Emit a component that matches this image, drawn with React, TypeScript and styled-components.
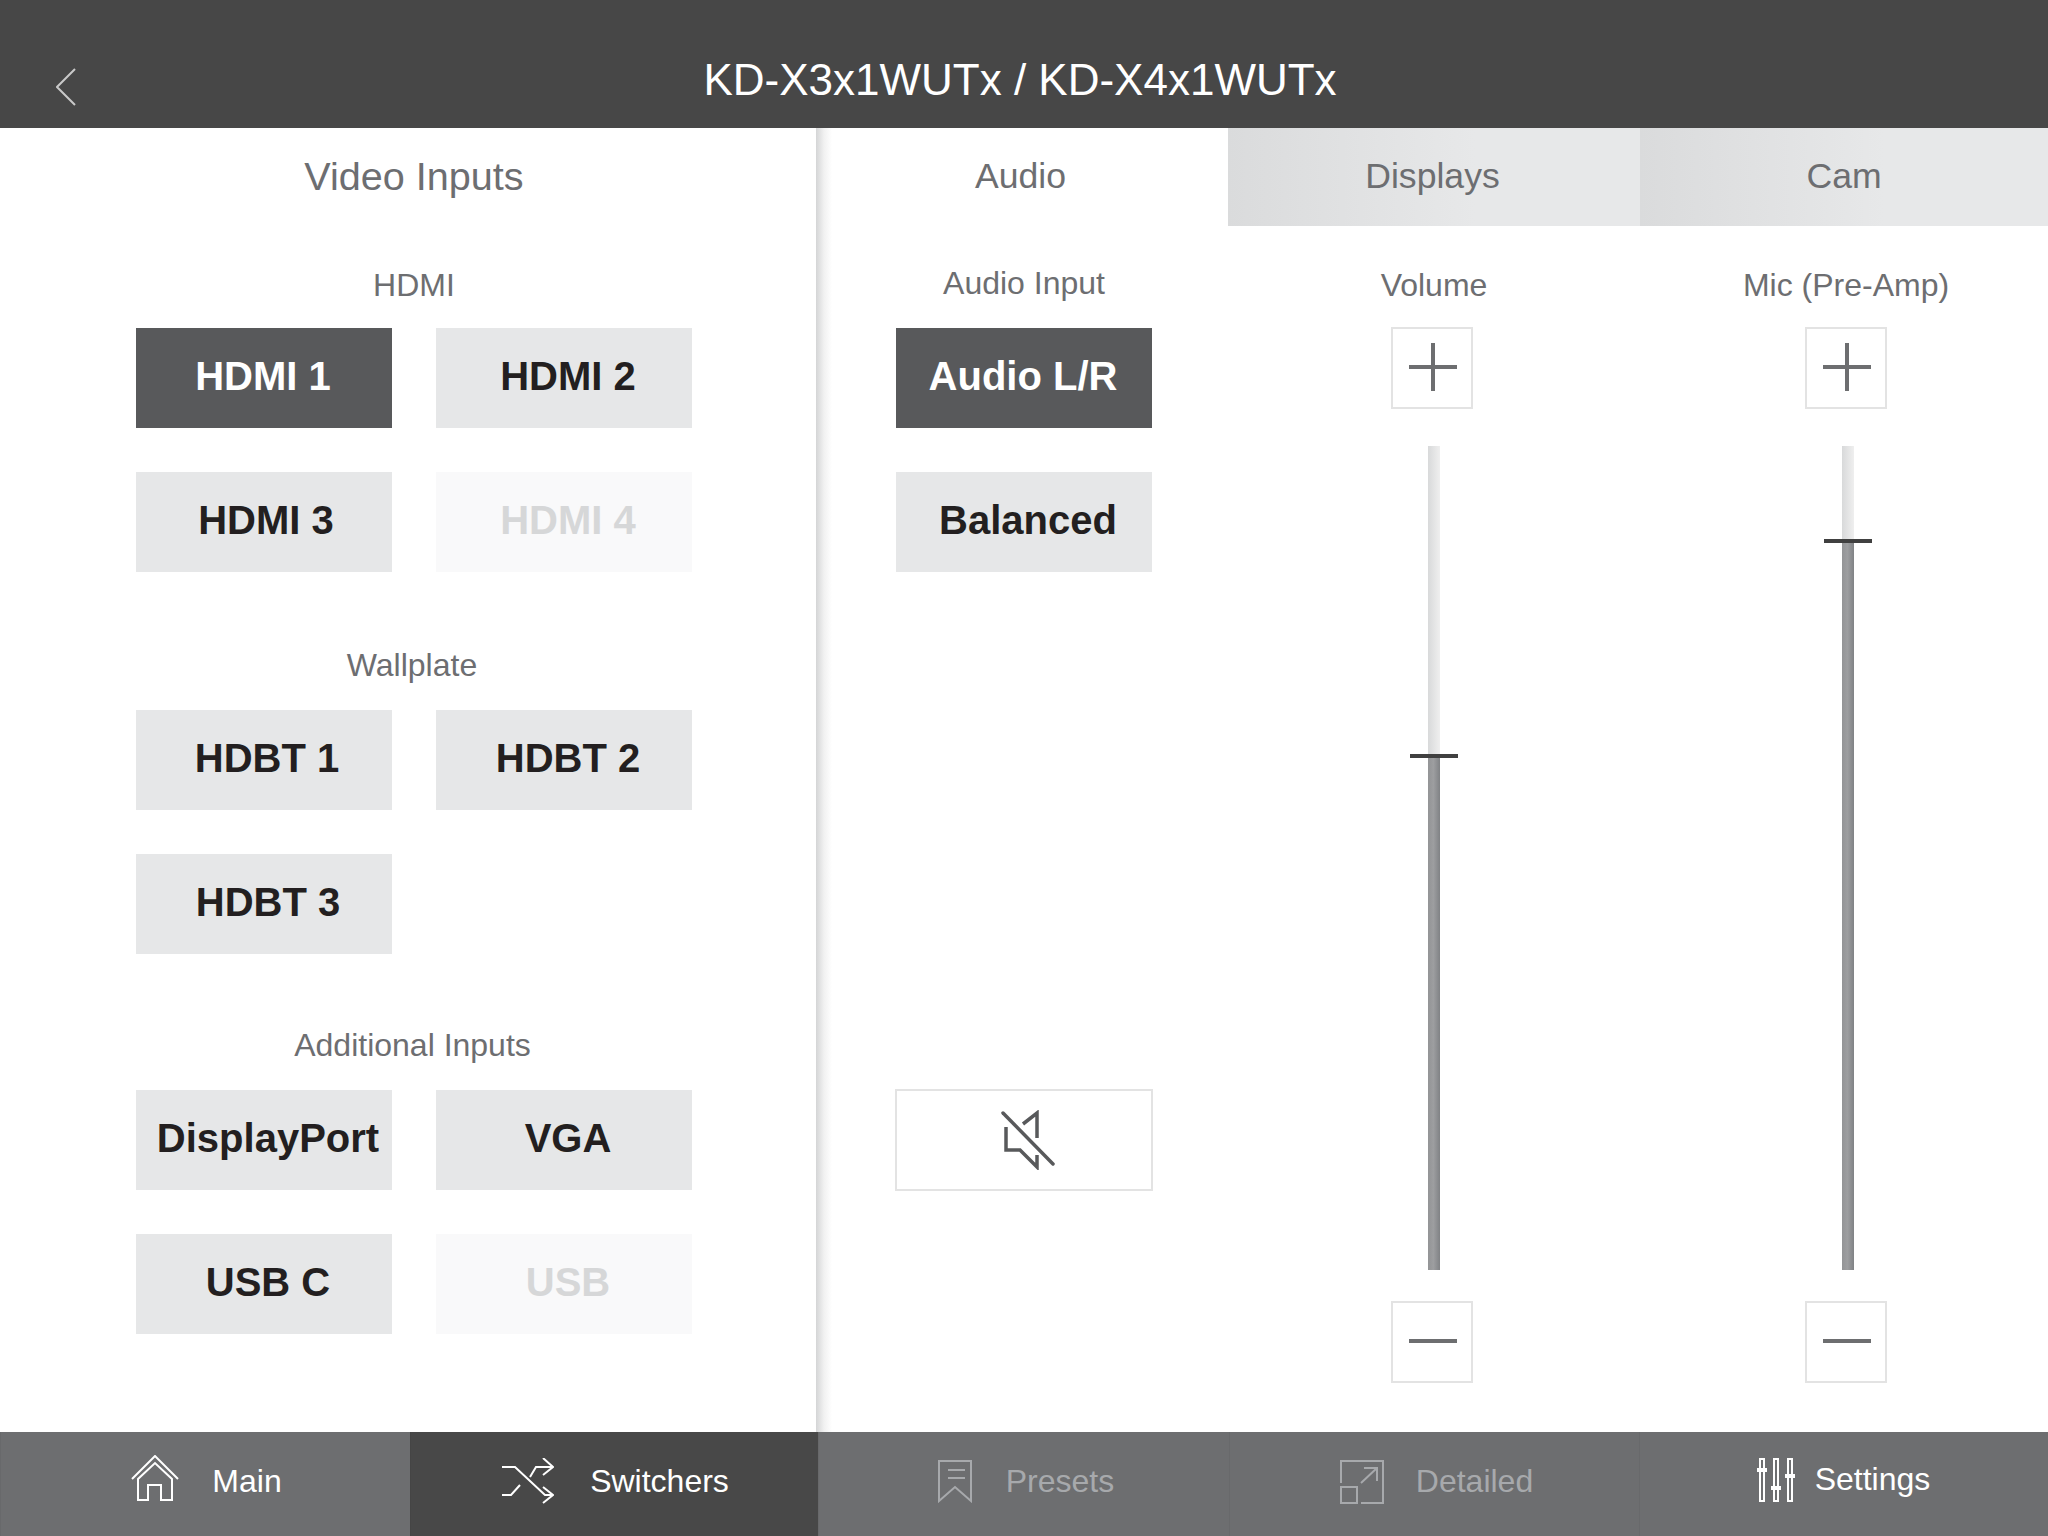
import React from "react";
import styled, { createGlobalStyle } from "styled-components";

const GlobalStyle = createGlobalStyle`
  html, body {
    margin: 0;
    padding: 0;
    background: #fff;
  }
  * {
    box-sizing: border-box;
  }
`;

const Page = styled.div`
  width: 2048px;
  height: 1536px;
  display: flex;
  flex-direction: column;
  font-family: "Liberation Sans", Arial, sans-serif;
  color: #6d6e71;
  overflow: hidden;
`;

const Header = styled.header`
  position: relative;
  height: 128px;
  flex: none;
  background: #474747;
  color: #fff;
  font-size: 44px;
  display: flex;
  justify-content: center;
  align-items: flex-end;
  padding: 0 8px 22px 0;
  line-height: 52px;
`;

const BackButton = styled.svg`
  position: absolute;
  left: 56px;
  top: 68px;
`;

const Main = styled.main`
  flex: 1;
  display: flex;
  min-height: 0;
`;

const LeftPanel = styled.section`
  width: 816px;
  flex: none;
  padding-left: 136px;
`;

const PanelTitle = styled.div`
  width: 556px;
  height: 96px;
  display: flex;
  align-items: center;
  justify-content: center;
  font-size: 39.6px;
`;

const Group = styled.div<{ $gapTop: number }>`
  width: 556px;
  margin-top: ${(p) => p.$gapTop}px;
  display: flex;
  flex-direction: column;
  align-items: center;
`;

const Label = styled.div<{ $shift?: number }>`
  height: 40px;
  line-height: 40px;
  font-size: 32px;
  text-align: center;
  margin-left: ${(p) => (p.$shift ?? 0) * 2}px;
`;

const ButtonGrid = styled.div<{ $top: number }>`
  width: 100%;
  margin-top: ${(p) => p.$top}px;
  display: grid;
  grid-template-columns: 256px 256px;
  column-gap: 44px;
  row-gap: 44px;
`;

const InputButton = styled.div<{ $state?: "on" | "off"; $nudge?: number }>`
  height: 100px;
  display: flex;
  align-items: center;
  justify-content: center;
  font-size: 40px;
  font-weight: 700;
  padding-bottom: 3px;
  padding-left: ${(p) => Math.max(p.$nudge ?? 0, 0) * 2}px;
  padding-right: ${(p) => Math.max(-(p.$nudge ?? 0), 0) * 2}px;
  background: ${(p) => (p.$state === "on" ? "#58595b" : p.$state === "off" ? "#f9f9fa" : "#e6e7e8")};
  color: ${(p) => (p.$state === "on" ? "#fff" : p.$state === "off" ? "#d6d7d8" : "#231f20")};
`;

const RightPanel = styled.section`
  position: relative;
  flex: 1;
  display: flex;
  flex-direction: column;

  &::before {
    content: "";
    position: absolute;
    left: 0;
    top: 0;
    bottom: 0;
    width: 16px;
    background: linear-gradient(to right, #d4d5d6, #f1f1f1 50%, #ffffff);
  }
`;

const Tabs = styled.div`
  height: 98px;
  flex: none;
  display: grid;
  grid-template-columns: 412px 412px 408px;
`;

const Tab = styled.div<{ $active?: boolean; $nudge?: number }>`
  display: flex;
  align-items: center;
  justify-content: center;
  font-size: 35.6px;
  padding-bottom: 2px;
  padding-right: ${(p) => (p.$nudge ?? 0) * 2}px;
  background: ${(p) => (p.$active ? "transparent" : "linear-gradient(to right, #dadbdc, #e7e8e9 60%)")};
`;

const Columns = styled.div`
  flex: 1;
  display: grid;
  grid-template-columns: 412px 412px 408px;
  min-height: 0;
`;

const AudioColumn = styled.div`
  padding: 37px 0 0 79px;
  display: flex;
  flex-direction: column;
`;

const AudioLabel = styled(Label)`
  width: 258px;
`;

const AudioButtons = styled.div`
  width: 256px;
  margin: 25px 0 0 1px;
  display: flex;
  flex-direction: column;
  gap: 44px;
`;

const MuteButton = styled.div`
  width: 258px;
  height: 102px;
  margin-top: 517px;
  border: 2px solid #e3e3e3;
  display: flex;
  align-items: center;
  justify-content: center;
  padding-left: 8px;
`;

const SliderColumn = styled.div<{ $shift: number }>`
  padding-top: 39px;
  padding-left: ${(p) => Math.max(p.$shift, 0) * 2}px;
  padding-right: ${(p) => Math.max(-p.$shift, 0) * 2}px;
  display: flex;
  flex-direction: column;
  align-items: center;
`;

const StepButton = styled.div`
  width: 82px;
  height: 82px;
  border: 2px solid #e3e3e3;
  display: flex;
  align-items: center;
  justify-content: center;
  padding-left: 2px;
`;

const PlusButton = styled(StepButton)`
  margin-top: 22px;
  padding-bottom: 2px;
`;

const MinusButton = styled(StepButton)`
  margin-top: 31px;
  padding-bottom: 2px;
`;

const Track = styled.div`
  position: relative;
  width: 12px;
  height: 824px;
  margin-top: 37px;
  margin-left: 4px;
  background: linear-gradient(to right, #d8d9da, #efefef);
`;

const TrackFill = styled.div`
  position: absolute;
  left: 0;
  right: 0;
  bottom: 0;
  background: linear-gradient(to right, #939496, #9d9ea0 45%, #808285);
`;

const Thumb = styled.div`
  position: absolute;
  left: -18px;
  width: 48px;
  height: 4px;
  top: -4px;
  background: #404040;
`;

const BottomNav = styled.nav`
  height: 104px;
  flex: none;
  display: grid;
  grid-template-columns: 410px 408px 411px 410px 409px;
  background: #6d6e70;
`;

const NavItem = styled.div<{ $active?: boolean; $dim?: boolean; $gap: number; $shift: number }>`
  display: flex;
  align-items: flex-start;
  justify-content: center;
  padding-left: ${(p) => p.$shift}px;
  gap: ${(p) => p.$gap}px;
  font-size: 32px;
  box-shadow: inset 1px 0 rgba(0, 0, 0, 0.04);
  background: ${(p) => (p.$active ? "#484848" : "transparent")};
  color: ${(p) => (p.$dim ? "#a7a9ac" : "#fff")};
`;

const NavIcon = styled.div<{ $top: number }>`
  margin-top: ${(p) => p.$top}px;
  display: flex;
`;

const NavLabel = styled.span<{ $top?: number }>`
  line-height: 40px;
  margin-top: ${(p) => p.$top ?? 29}px;
`;

const HomeIcon = () => (
  <svg width="48" height="46" viewBox="0 0 48 46" fill="none" stroke="#fff" strokeWidth="2">
    <path d="M1 24 L24 1 L47 24" />
    <path d="M7 24 V45 H17 V30 H30 V45 H41 V24 L24 8 Z" />
  </svg>
);

const ShuffleIcon = () => (
  <svg width="52" height="46" viewBox="0 0 52 46" fill="none" stroke="#fff" strokeWidth="2">
    <path d="M0 9 H13 L43 37 H51" />
    <path d="M0 37 H9 L18 27" />
    <path d="M28 19 L34 9 H51" />
    <path d="M41 0 L51 9 L41 17" />
    <path d="M41 29 L51 37 L41 45" />
  </svg>
);

const PresetIcon = () => (
  <svg width="34" height="43" viewBox="0 0 34 43" fill="none" stroke="#a7a9ac" strokeWidth="2">
    <path d="M1 1 H33 V41 L17 27 L1 41 Z" />
    <path d="M10 10 H27 M10 18 H27" />
  </svg>
);

const DetailedIcon = () => (
  <svg width="44" height="44" viewBox="0 0 44 44" fill="none" stroke="#a7a9ac" strokeWidth="2">
    <path d="M1 23 V1 H43 V43 H21" />
    <rect x="1" y="27" width="16" height="16" />
    <path d="M21 23 L37 8 M24 8 H37 V21" />
  </svg>
);

const SettingsIcon = () => (
  <svg width="38" height="44" viewBox="0 0 38 44" fill="none" stroke="#fff" strokeWidth="2">
    <rect x="3" y="1" width="4" height="42" />
    <rect x="17" y="1" width="4" height="42" />
    <rect x="31" y="1" width="4" height="42" />
    <rect x="0" y="10" width="10" height="4" fill="#fff" stroke="none" />
    <rect x="14" y="28" width="10" height="4" fill="#fff" stroke="none" />
    <rect x="28" y="16" width="10" height="4" fill="#fff" stroke="none" />
  </svg>
);

const PlusIcon = () => (
  <svg width="48" height="48" viewBox="0 0 48 48" stroke="#6d6e70" strokeWidth="4">
    <path d="M24 0 V48 M0 24 H48" />
  </svg>
);

const MinusIcon = () => (
  <svg width="48" height="4" viewBox="0 0 48 4" stroke="#6d6e70" strokeWidth="4">
    <path d="M0 2 H48" />
  </svg>
);

const MuteIcon = () => (
  <svg width="56" height="60" viewBox="0 0 56 60" fill="none" stroke="#58595b" strokeWidth="3.5">
    <path d="M3 3 L53 54" strokeLinecap="round" />
    <path d="M6 17 V40 H20 L37 57 V45" />
    <path d="M23 14 L37 3 V28" />
  </svg>
);

const Slider = ({ label, thumbTop, shift, labelShift }: { label: string; thumbTop: number; shift: number; labelShift: number }) => (
  <SliderColumn $shift={shift}>
    <Label $shift={labelShift}>{label}</Label>
    <PlusButton>
      <PlusIcon />
    </PlusButton>
    <Track>
      <TrackFill style={{ top: thumbTop }}>
        <Thumb />
      </TrackFill>
    </Track>
    <MinusButton>
      <MinusIcon />
    </MinusButton>
  </SliderColumn>
);

export default function App() {
  return (
    <Page>
      <GlobalStyle />
      <Header>
        <BackButton width="20" height="38" viewBox="0 0 20 38" fill="none" stroke="#c9c9c9" strokeWidth="2">
          <path d="M19 1 L1 19 L19 37" />
        </BackButton>
        KD-X3x1WUTx / KD-X4x1WUTx
      </Header>
      <Main>
        <LeftPanel>
          <PanelTitle>Video Inputs</PanelTitle>
          <Group $gapTop={41}>
            <Label>HDMI</Label>
            <ButtonGrid $top={23}>
              <InputButton $state="on" $nudge={-1}>HDMI 1</InputButton>
              <InputButton $nudge={4}>HDMI 2</InputButton>
              <InputButton $nudge={2}>HDMI 3</InputButton>
              <InputButton $state="off" $nudge={4}>HDMI 4</InputButton>
            </ButtonGrid>
          </Group>
          <Group $gapTop={73}>
            <Label $shift={-2}>Wallplate</Label>
            <ButtonGrid $top={25}>
              <InputButton $nudge={3}>HDBT 1</InputButton>
              <InputButton $nudge={4}>HDBT 2</InputButton>
              <InputButton $nudge={4}>HDBT 3</InputButton>
            </ButtonGrid>
          </Group>
          <Group $gapTop={71}>
            <Label $shift={-1.5}>Additional Inputs</Label>
            <ButtonGrid $top={25}>
              <InputButton $nudge={4}>DisplayPort</InputButton>
              <InputButton $nudge={4}>VGA</InputButton>
              <InputButton $nudge={4}>USB C</InputButton>
              <InputButton $state="off" $nudge={4}>USB</InputButton>
            </ButtonGrid>
          </Group>
        </LeftPanel>
        <RightPanel>
          <Tabs>
            <Tab $active $nudge={1.5}>Audio</Tab>
            <Tab $nudge={1.5}>Displays</Tab>
            <Tab>Cam</Tab>
          </Tabs>
          <Columns>
            <AudioColumn>
              <AudioLabel>Audio Input</AudioLabel>
              <AudioButtons>
                <InputButton $state="on" $nudge={-1}>Audio L/R</InputButton>
                <InputButton $nudge={4}>Balanced</InputButton>
              </AudioButtons>
              <MuteButton>
                <MuteIcon />
              </MuteButton>
            </AudioColumn>
            <Slider label="Volume" thumbTop={312} shift={-2} labelShift={2} />
            <Slider label="Mic (Pre-Amp)" thumbTop={97} shift={2} labelShift={0} />
          </Columns>
        </RightPanel>
      </Main>
      <BottomNav>
        <NavItem $gap={33} $shift={3}>
          <NavIcon $top={23}>
            <HomeIcon />
          </NavIcon>
          <NavLabel>Main</NavLabel>
        </NavItem>
        <NavItem $active $gap={36} $shift={3}>
          <NavIcon $top={26}>
            <ShuffleIcon />
          </NavIcon>
          <NavLabel>Switchers</NavLabel>
        </NavItem>
        <NavItem $dim $gap={34} $shift={5}>
          <NavIcon $top={28}>
            <PresetIcon />
          </NavIcon>
          <NavLabel>Presets</NavLabel>
        </NavItem>
        <NavItem $dim $gap={32} $shift={5}>
          <NavIcon $top={28}>
            <DetailedIcon />
          </NavIcon>
          <NavLabel>Detailed</NavLabel>
        </NavItem>
        <NavItem $gap={20} $shift={0}>
          <NavIcon $top={26}>
            <SettingsIcon />
          </NavIcon>
          <NavLabel $top={27}>Settings</NavLabel>
        </NavItem>
      </BottomNav>
    </Page>
  );
}
